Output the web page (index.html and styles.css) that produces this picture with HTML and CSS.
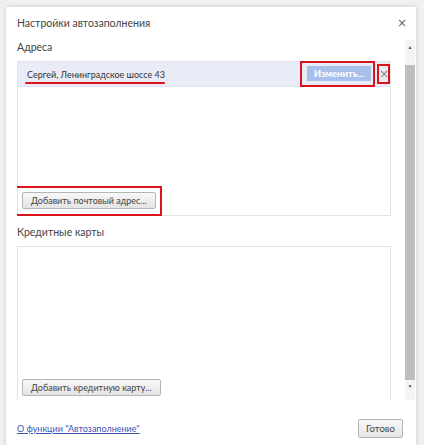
FILE: index.html
```html
<!DOCTYPE html>
<html lang="ru">
<head>
  <meta charset="UTF-8">
  <title>Настройки автозаполнения</title>
  <link rel="stylesheet" href="styles.css">
</head>
<body>
  <div class="dialog">
    <div class="dialog-head">
      <span class="dialog-title">Настройки автозаполнения</span>
      <span class="close">&#215;</span>
    </div>

    <div class="scroller">
      <div class="content">
        <div class="section-title">Адреса</div>
        <div class="list">
          <div class="row selected">
            <span class="row-text marked">Сергей, Ленинградское шоссе 43</span>
            <span class="row-actions">
              <span class="edit-wrap"><button class="edit-btn">Изменить...</button></span>
              <span class="del-wrap">&#215;</span>
            </span>
          </div>
          <div class="list-foot">
            <span class="boxed"><button class="btn">Добавить почтовый адрес...</button></span>
          </div>
        </div>

        <div class="section-title">Кредитные карты</div>
        <div class="list">
          <div class="list-foot">
            <button class="btn">Добавить кредитную карту...</button>
          </div>
        </div>
      </div>

      <div class="scrollbar">
        <span class="arrow">&#9650;</span>
        <div class="thumb"></div>
        <span class="arrow">&#9660;</span>
      </div>
    </div>

    <div class="dialog-foot">
      <a href="#" class="help-link">О функции "Автозаполнение"</a>
      <button class="btn done">Готово</button>
    </div>
  </div>
</body>
</html>
```
FILE: styles.css
```css
body {
  margin: 0;
  background: #eef0f1;
  font-family: Lato, "Open Sans", Arial, sans-serif;
  color: #333;
  height: 445px;
  overflow: hidden;
}

.dialog {
  margin: 7px 0 0 6px;
  width: 410px;
  height: 438px;
  background: #fff;
  box-shadow: 0 0 4px rgba(0, 0, 0, 0.18);
  display: flex;
  flex-direction: column;
}

.dialog-head {
  display: flex;
  justify-content: space-between;
  align-items: flex-start;
  padding: 10px 8px 0 11px;
  height: 23px;
}

.dialog-title {
  font-size: 10.5px;
  color: #444;
}

.close {
  font-size: 12px;
  color: #666;
  font-family: "DejaVu Sans", sans-serif;
  line-height: 12px;
  margin-right: 1px;
}

.scroller {
  display: flex;
  height: 360px;
  overflow: hidden;
  margin-left: 11px;
}

.content {
  width: 374px;
}

.section-title {
  font-size: 10.5px;
  color: #444;
  height: 21px;
  line-height: 14px;
}

.section-title + .list {
  margin-bottom: 9px;
}

.list {
  height: 153px;
  border: 1px solid #e2e2e2;
  display: flex;
  flex-direction: column;
  justify-content: space-between;
}

.list:last-child {
  justify-content: flex-end;
}

.row {
  height: 24px;
  display: flex;
  align-items: center;
  justify-content: space-between;
  padding: 0 0 0 9px;
}

.row.selected {
  background: #e9ecf6;
  border-bottom: 1px solid #dde2ef;
}

.row-text {
  font-size: 9px;
  color: #333;
  position: relative;
}

.marked::after {
  content: "";
  position: absolute;
  left: -2px;
  right: 0;
  bottom: -4px;
  height: 2px;
  background: #d9141c;
  border-radius: 1px;
}

.row-actions {
  display: flex;
  align-items: center;
  gap: 2px;
}

.edit-wrap {
  border: 2px solid #d9141c;
  padding: 3px 2px 4px 5px;
  display: flex;
}

.edit-btn {
  border: none;
  background: #a8bfea;
  color: #fff;
  font-family: inherit;
  font-size: 9.5px;
  font-weight: 700;
  height: 15px;
  width: 64px;
  line-height: 13px;
  padding: 0 3px;
}

.del-wrap {
  border: 2px solid #d9141c;
  width: 9px;
  height: 16px;
  font-family: "DejaVu Sans", sans-serif;
  font-size: 12px;
  color: #888;
  line-height: 16px;
  text-align: center;
}

.list-foot {
  padding: 0 0 4px 4px;
}

.btn {
  font-family: inherit;
  font-size: 9px;
  color: #444;
  height: 17px;
  padding: 0 8px;
  border: 1px solid #b5b5b5;
  border-radius: 2px;
  background: linear-gradient(#f8f8f8, #e4e4e4);
}

.boxed {
  display: inline-flex;
  border: 2px solid #d9141c;
  padding: 4px 4px 5px 5px;
  margin: 0 0 -7px -7px;
  position: relative;
  top: -2px;
}

.scrollbar {
  width: 10px;
  margin-left: 14px;
  display: flex;
  flex-direction: column;
  align-items: center;
  background: #f4f4f4;
}

.arrow {
  font-size: 5px;
  color: #555;
  height: 25px;
  line-height: 14px;
}

.arrow:last-child {
  height: 20px;
  line-height: 12px;
}

.thumb {
  flex: 1;
  width: 10px;
  background: #bdbdbd;
}

.dialog-foot {
  display: flex;
  justify-content: space-between;
  align-items: center;
  padding: 19px 13px 0 11px;
}

.help-link {
  font-size: 9px;
  color: #3b55b5;
}

.done {
  height: 19px;
  width: 45px;
  padding: 0;
  font-size: 9.5px;
}
```
